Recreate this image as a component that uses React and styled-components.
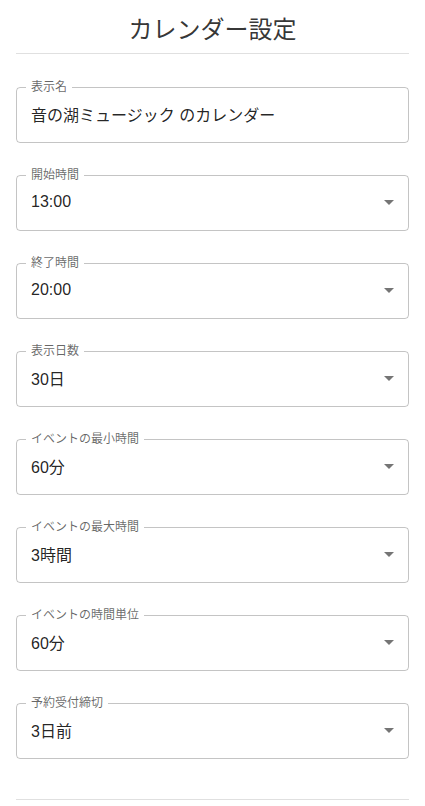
import React from 'react';
import styled, { createGlobalStyle } from 'styled-components';

const GlobalStyle = createGlobalStyle`
  body {
    margin: 0;
    background: #fff;
    font-family: "Liberation Sans", "Noto Sans CJK JP", sans-serif;
    color: rgba(0, 0, 0, 0.87);
  }
`;

const Page = styled.div`
  padding: 0 16px;
`;

const Title = styled.h1`
  margin: 0;
  padding: 14px 0 7px;
  font-size: 24px;
  font-weight: 400;
  line-height: 32px;
  text-align: center;
  color: rgba(0, 0, 0, 0.8);
  border-bottom: 1px solid rgba(0, 0, 0, 0.12);
`;

const Form = styled.div`
  display: flex;
  flex-direction: column;
  gap: 26px;
  padding: 27px 0 40px;
  border-bottom: 1px solid rgba(0, 0, 0, 0.12);
`;

const Box = styled.fieldset`
  margin: 0;
  padding: 0 14px;
  border: 1px solid rgba(0, 0, 0, 0.23);
  border-radius: 4px;
  min-width: 0;
`;

const Legend = styled.legend`
  margin-left: -5px;
  padding: 0 5px;
  font-size: 12px;
  line-height: 12px;
  color: rgba(0, 0, 0, 0.6);
`;

const ValueRow = styled.div`
  display: flex;
  align-items: center;
  justify-content: space-between;
  height: 42px;
  padding-bottom: 7px;
  font-size: 16px;
  color: rgba(0, 0, 0, 0.87);
`;

const Arrow = styled.svg`
  width: 24px;
  height: 24px;
  margin-right: -7px;
  fill: rgba(0, 0, 0, 0.54);
`;

const fields = [
  { label: '表示名', value: '音の湖ミュージック のカレンダー', select: false },
  { label: '開始時間', value: '13:00', select: true },
  { label: '終了時間', value: '20:00', select: true },
  { label: '表示日数', value: '30日', select: true },
  { label: 'イベントの最小時間', value: '60分', select: true },
  { label: 'イベントの最大時間', value: '3時間', select: true },
  { label: 'イベントの時間単位', value: '60分', select: true },
  { label: '予約受付締切', value: '3日前', select: true },
];

const Field = ({ label, value, select }) => (
  <Box>
    <Legend>{label}</Legend>
    <ValueRow>
      <span>{value}</span>
      {select && (
        <Arrow viewBox="0 0 24 24">
          <path d="M7 10l5 5 5-5z" />
        </Arrow>
      )}
    </ValueRow>
  </Box>
);

const App = () => (
  <Page>
    <GlobalStyle />
    <Title>カレンダー設定</Title>
    <Form>
      {fields.map((f) => (
        <Field key={f.label} {...f} />
      ))}
    </Form>
  </Page>
);

export default App;
